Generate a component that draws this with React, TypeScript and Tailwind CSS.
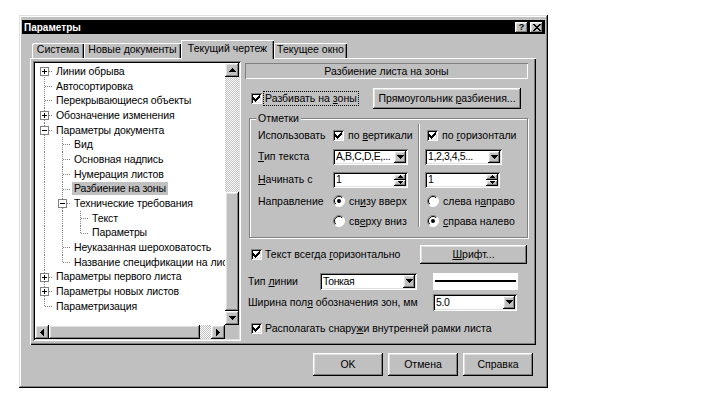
import React from "react";

const raised =
  "shadow-[inset_-1px_-1px_#000,inset_1px_1px_#fff,inset_-2px_-2px_#808080,inset_2px_2px_#dfdfdf]";
const sunken =
  "shadow-[inset_1px_1px_#808080,inset_-1px_-1px_#fff,inset_2px_2px_#000,inset_-2px_-2px_#dfdfdf]";

type Dir = "up" | "down" | "left" | "right";

function Tri({ dir }: { dir: Dir }) {
  const d: Record<Dir, string> = {
    down: "M0 0h7v1H0zM1 1h5v1H1zM2 2h3v1H2zM3 3h1v1H3z",
    up: "M3 0h1v1H3zM2 1h3v1H2zM1 2h5v1H1zM0 3h7v1H0z",
    right: "M0 0h1v7H0zM1 1h1v5H1zM2 2h1v3H2zM3 3h1v1H3z",
    left: "M3 0h1v7H3zM2 1h1v5H2zM1 2h1v3H1zM0 3h1v1H0z",
  };
  const v = dir === "up" || dir === "down";
  return (
    <svg width={v ? 7 : 4} height={v ? 4 : 7} shapeRendering="crispEdges">
      <path d={d[dir]} fill="#000" />
    </svg>
  );
}

function SmallTri({ up }: { up?: boolean }) {
  return (
    <svg width={5} height={3} shapeRendering="crispEdges">
      <path d={up ? "M2 0h1v1H2zM1 1h3v1H1zM0 2h5v1H0z" : "M0 0h5v1H0zM1 1h3v1H1zM2 2h1v1H2z"} fill="#000" />
    </svg>
  );
}

function ArrowBtn({ dir }: { dir: Dir }) {
  return (
    <div className={`w-[14px] h-[14px] shrink-0 bg-[#c0c0c0] ${raised} flex items-center justify-center`}>
      <Tri dir={dir} />
    </div>
  );
}

function Check({ checked = true }: { checked?: boolean }) {
  return (
    <span className={`w-[11px] h-[11px] shrink-0 bg-white ${sunken} flex items-center justify-center`}>
      {checked && (
        <svg width={7} height={7} shapeRendering="crispEdges">
          <path
            d="M6 0h1v1H6zM5 1h2v1H5zM0 2h1v1H0zM4 2h3v1H4zM0 3h2v1H0zM3 3h3v1H3zM0 4h5v1H0zM1 5h3v1H1zM2 6h1v1H2z"
            fill="#000"
          />
        </svg>
      )}
    </span>
  );
}

function Radio({ checked }: { checked?: boolean }) {
  return (
    <svg width={12} height={12} className="shrink-0">
      <circle cx={6} cy={6} r={5.5} fill="#fff" />
      <path d="M2.1 9.9 A5.5 5.5 0 0 1 9.9 2.1" stroke="#808080" fill="none" />
      <path d="M2.8 9.2 A4.5 4.5 0 0 1 9.2 2.8" stroke="#000" fill="none" />
      <path d="M9.9 2.1 A5.5 5.5 0 0 1 2.1 9.9" stroke="#fff" fill="none" />
      {checked && <circle cx={6} cy={6} r={2} fill="#000" />}
    </svg>
  );
}

function Combo({ value, className }: { value: string; className: string }) {
  return (
    <div className={`${className} shrink-0 bg-white ${sunken} flex items-stretch p-[2px]`}>
      <span className="flex-1 pl-[1px] overflow-hidden whitespace-nowrap tracking-[-0.4px] flex items-center">{value}</span>
      <div className={`w-[12px] bg-[#c0c0c0] ${raised} flex items-center justify-center`}>
        <Tri dir="down" />
      </div>
    </div>
  );
}

function Spin({ className }: { className: string }) {
  return (
    <div className={`${className} shrink-0 bg-white ${sunken} flex items-stretch p-[2px]`}>
      <span className="flex-1 pl-[1px] flex items-center">1</span>
      <div className="w-[12px] flex flex-col">
        <div className={`flex-1 bg-[#c0c0c0] ${raised} flex items-center justify-center`}>
          <SmallTri up />
        </div>
        <div className={`flex-1 bg-[#c0c0c0] ${raised} flex items-center justify-center`}>
          <SmallTri />
        </div>
      </div>
    </div>
  );
}

type Row = {
  level: number;
  label: string;
  box?: "plus" | "minus";
  cont: boolean[];
  own: "full" | "first" | "last";
  selected?: boolean;
};

const rows: Row[] = [
  { level: 0, label: "Линии обрыва", box: "plus", cont: [], own: "first" },
  { level: 0, label: "Автосортировка", cont: [], own: "full" },
  { level: 0, label: "Перекрывающиеся объекты", cont: [], own: "full" },
  { level: 0, label: "Обозначение изменения", box: "plus", cont: [], own: "full" },
  { level: 0, label: "Параметры документа", box: "minus", cont: [], own: "full" },
  { level: 1, label: "Вид", cont: [true], own: "full" },
  { level: 1, label: "Основная надпись", cont: [true], own: "full" },
  { level: 1, label: "Нумерация листов", cont: [true], own: "full" },
  { level: 1, label: "Разбиение на зоны", cont: [true], own: "full", selected: true },
  { level: 1, label: "Технические требования", box: "minus", cont: [true], own: "full" },
  { level: 2, label: "Текст", cont: [true, true], own: "full" },
  { level: 2, label: "Параметры", cont: [true, true], own: "last" },
  { level: 1, label: "Неуказанная шероховатость", cont: [true], own: "full" },
  { level: 1, label: "Название спецификации на лист", cont: [true], own: "last" },
  { level: 0, label: "Параметры первого листа", box: "plus", cont: [], own: "full" },
  { level: 0, label: "Параметры новых листов", box: "plus", cont: [], own: "full" },
  { level: 0, label: "Параметризация", cont: [], own: "last" },
];

function TreeRow({ r }: { r: Row }) {
  const w = 19 + 18 * r.level;
  const mid = 7;
  const cx = 9 + 18 * r.level;
  const dot = { stroke: "#808080", strokeDasharray: "1 1" };
  return (
    <div className="h-[14.7px] flex items-center whitespace-nowrap">
      <svg width={w} className="h-full shrink-0" shapeRendering="crispEdges">
        {r.cont.map((c, i) =>
          c ? <line key={i} x1={9 + 18 * i + 0.5} x2={9 + 18 * i + 0.5} y1={0} y2="100%" {...dot} /> : null
        )}
        {r.own === "full" && <line x1={cx + 0.5} x2={cx + 0.5} y1={0} y2="100%" {...dot} />}
        {r.own === "first" && <line x1={cx + 0.5} x2={cx + 0.5} y1={mid} y2="100%" {...dot} />}
        {r.own === "last" && <line x1={cx + 0.5} x2={cx + 0.5} y1={0} y2={mid} {...dot} />}
        <line x1={r.box ? cx + 5 : cx + 1} x2={w - 1} y1={mid + 0.5} y2={mid + 0.5} {...dot} />
        {r.box && (
          <>
            <rect x={cx - 4 + 0.5} y={mid - 4 + 0.5} width={8} height={8} fill="#fff" stroke="#808080" />
            <line x1={cx - 2} x2={cx + 3} y1={mid + 0.5} y2={mid + 0.5} stroke="#000" />
            {r.box === "plus" && <line x1={cx + 0.5} x2={cx + 0.5} y1={mid - 2} y2={mid + 3} stroke="#000" />}
          </>
        )}
      </svg>
      <span className={`px-[2px] h-[13px] leading-[13px] tracking-[-0.1px] ${r.selected ? "bg-[#c0c0c0]" : ""}`}>{r.label}</span>
    </div>
  );
}

function Btn({ children, className }: { children: React.ReactNode; className: string }) {
  return (
    <div className={`${className} shrink-0 bg-[#c0c0c0] ${raised} flex items-center justify-center`}>{children}</div>
  );
}

export default function App() {
  return (
    <div className="w-[720px] h-[395px] bg-white pl-[19px] pt-[15px] font-['Liberation_Sans',Arial,sans-serif] text-[10.5px] leading-[13px] text-black">
      <div className="w-[529px] h-[373px] bg-[#c0c0c0] shadow-[inset_-1px_-1px_#000,inset_1px_1px_#dfdfdf,inset_-2px_-2px_#808080,inset_2px_2px_#fff] pt-[5px] px-[3px] flex flex-col">
        {/* Title bar */}
        <div className="h-[14px] bg-black flex items-center pl-[2px] pr-[2px]">
          <span className="text-white font-bold text-[10px]">Параметры</span>
          <div className="ml-auto flex gap-[2px]">
            <div className={`w-[13px] h-[11px] bg-[#c0c0c0] ${raised} flex items-center justify-center`}>
              <span className="font-bold text-[9px] leading-[9px]">?</span>
            </div>
            <div className={`w-[13px] h-[11px] bg-[#c0c0c0] ${raised} flex items-center justify-center`}>
              <svg width={8} height={7} shapeRendering="crispEdges">
                <path d="M0 0h2v1H0zM6 0h2v1H6zM1 1h2v1H1zM5 1h2v1H5zM2 2h4v1H2zM3 3h2v1H3zM2 4h4v1H2zM1 5h2v1H1zM5 5h2v1H5zM0 6h2v1H0zM6 6h2v1H6z" fill="#000" />
              </svg>
            </div>
          </div>
        </div>

        {/* Tabs + panel */}
        <div className="mt-[6px] ml-[8px] w-[506px] flex flex-col">
          <div className="h-[18px] flex items-end pl-[2px]">
            <div className="w-[52px] h-[15px] pb-[2px] flex items-center justify-center rounded-tl-[2px] shadow-[inset_1px_1px_#fff,inset_-1px_0_#000,inset_-2px_0_#808080]">
              Система
            </div>
            <div className="w-[97px] h-[15px] pb-[2px] flex items-center justify-center shadow-[inset_1px_1px_#fff,inset_-1px_0_#000,inset_-2px_0_#808080]">
              Новые документы
            </div>
            <div className="relative z-10 w-[93px] h-[19px] mb-[-1px] pb-[2px] bg-[#c0c0c0] flex items-center justify-center shadow-[inset_1px_1px_#fff,inset_-1px_0_#000,inset_-2px_0_#808080]">
              Текущий чертеж
            </div>
            <div className="w-[73px] h-[15px] pb-[2px] flex items-center justify-center shadow-[inset_1px_1px_#fff,inset_-1px_0_#000,inset_-2px_0_#808080]">
              Текущее окно
            </div>
          </div>

          <div className="h-[287px] shadow-[inset_1px_1px_#fff,inset_-1px_-1px_#000,inset_-2px_-2px_#808080] flex pt-[3px] pl-[3px]">
            {/* Tree box */}
            <div className={`w-[208px] h-[280px] shrink-0 p-[2px] ${sunken} flex flex-col`}>
              <div className="h-[262px] flex">
                <div className="w-[190px] bg-white overflow-hidden pt-[1px]">
                  {rows.map((r, i) => (
                    <TreeRow key={i} r={r} />
                  ))}
                </div>
                <div className="w-[14px] flex flex-col">
                  <ArrowBtn dir="up" />
                  <div className="h-[115px] bg-[image:repeating-conic-gradient(#c0c0c0_0%_25%,#ffffff_0%_50%)] bg-[length:2px_2px]" />
                  <div className={`h-[119px] bg-[#c0c0c0] ${raised}`} />
                  <ArrowBtn dir="down" />
                </div>
              </div>
              <div className="h-[14px] flex">
                <ArrowBtn dir="left" />
                <div className={`w-[151px] bg-[#c0c0c0] ${raised}`} />
                <div className="w-[11px] bg-[image:repeating-conic-gradient(#c0c0c0_0%_25%,#ffffff_0%_50%)] bg-[length:2px_2px]" />
                <ArrowBtn dir="right" />
                <div className="w-[14px] bg-[#c0c0c0]" />
              </div>
            </div>

            {/* Right column */}
            <div className="ml-[4px] mt-[2px] w-[283px] flex flex-col">
              <div className="h-[16px] shadow-[inset_1px_1px_#808080,inset_-1px_-1px_#fff] flex items-center justify-center">
                Разбиение листа на зоны
              </div>

              <div className="mt-[9px] h-[21px] flex items-center pl-[6px]">
                <Check />
                <span className="ml-[1px] border border-dotted border-black px-[1px] h-[15px] flex items-center">
                  Разбивать на&nbsp;<u>з</u>оны
                </span>
                <Btn className="ml-auto mr-[7px] w-[148px] h-[21px]">
                  <span>
                    Прямоугольник <u>р</u>азбиения...
                  </span>
                </Btn>
              </div>

              {/* Group box */}
              <div className="ml-[4px] mt-[9px] w-[279px] h-[120px] shrink-0 border border-[#808080] shadow-[1px_1px_#fff,inset_1px_1px_#fff] flex flex-col">
                <div className="-mt-[7px] ml-[6px] px-[2px] bg-[#c0c0c0] w-fit h-[13px] leading-[13px]">Отметки</div>
                <div className="flex">
                  <div className="w-[168px] pl-[8px] flex flex-col">
                    <div className="h-[20px] flex items-center">
                      <span className="w-[75px]">Использовать</span>
                      <Check />
                      <span className="ml-[4px]">
                        по <u>в</u>ертикали
                      </span>
                    </div>
                    <div className="h-[23px] flex items-center">
                      <span className="w-[75px]">
                        <u>Т</u>ип текста
                      </span>
                      <Combo value="A,B,C,D,E,..." className="w-[75px] h-[16px]" />
                    </div>
                    <div className="h-[23px] flex items-center">
                      <span className="w-[75px]">
                        <u>Н</u>ачинать с
                      </span>
                      <Spin className="w-[75px] h-[16px]" />
                    </div>
                    <div className="h-[20px] flex items-center">
                      <span className="w-[75px]">Направление</span>
                      <Radio checked />
                      <span className="ml-[4px]">
                        сн<u>и</u>зу вверх
                      </span>
                    </div>
                    <div className="h-[20px] flex items-center">
                      <span className="w-[75px]" />
                      <Radio />
                      <span className="ml-[4px]">
                        св<u>е</u>рху вниз
                      </span>
                    </div>
                  </div>
                  <div className="w-[2px] mt-[-1px] mb-[4px] border-l border-[#808080] bg-white" />
                  <div className="w-[107px] pl-[5px] flex flex-col">
                    <div className="h-[20px] flex items-center pl-[2px]">
                      <Check />
                      <span className="ml-[4px]">
                        по <u>г</u>оризонтали
                      </span>
                    </div>
                    <div className="h-[23px] flex items-center">
                      <Combo value="1,2,3,4,5..." className="w-[77px] h-[16px]" />
                    </div>
                    <div className="h-[23px] flex items-center">
                      <Spin className="w-[75px] h-[16px]" />
                    </div>
                    <div className="h-[20px] flex items-center pl-[2px]">
                      <Radio />
                      <span className="ml-[4px]">
                        слева н<u>а</u>право
                      </span>
                    </div>
                    <div className="h-[20px] flex items-center pl-[2px]">
                      <Radio checked />
                      <span className="ml-[4px]">
                        <u>с</u>права налево
                      </span>
                    </div>
                  </div>
                </div>
              </div>

              <div className="mt-[6px] h-[20px] flex items-center pl-[6px]">
                <Check />
                <span className="ml-[3px]">
                  Текст всегда <u>г</u>оризонтально
                </span>
                <Btn className="ml-auto mr-[1px] w-[107px] h-[19px]">
                  <span>
                    <u>Ш</u>рифт...
                  </span>
                </Btn>
              </div>

              <div className="mt-[8px] h-[18px] flex items-center pl-[3px]">
                <span className="w-[72px] shrink-0">
                  Тип <u>л</u>инии
                </span>
                <Combo value="Тонкая" className="w-[97px] h-[17px]" />
                <div className="ml-[16px] w-[85px] h-[17px] bg-white flex items-center px-[2px]">
                  <div className="w-full h-[2px] bg-black" />
                </div>
              </div>

              <div className="mt-[3px] h-[18px] flex items-center pl-[3px]">
                <span className="w-[185px] shrink-0">
                  Ширина пол<u>я</u> обозначения зон, мм
                </span>
                <Combo value="5.0" className="w-[84px] h-[17px]" />
              </div>

              <div className="mt-[9px] h-[16px] flex items-center pl-[6px]">
                <Check />
                <span className="ml-[3px]">
                  Располагать снару<u>ж</u>и внутренней рамки листа
                </span>
              </div>
            </div>
          </div>

          {/* Bottom buttons */}
          <div className="mt-[8px] flex justify-end gap-[5px] pr-[3px]">
            <Btn className="w-[70px] h-[23px]">OK</Btn>
            <Btn className="w-[70px] h-[23px]">Отмена</Btn>
            <Btn className="w-[70px] h-[23px]">Справка</Btn>
          </div>
        </div>
      </div>
    </div>
  );
}
